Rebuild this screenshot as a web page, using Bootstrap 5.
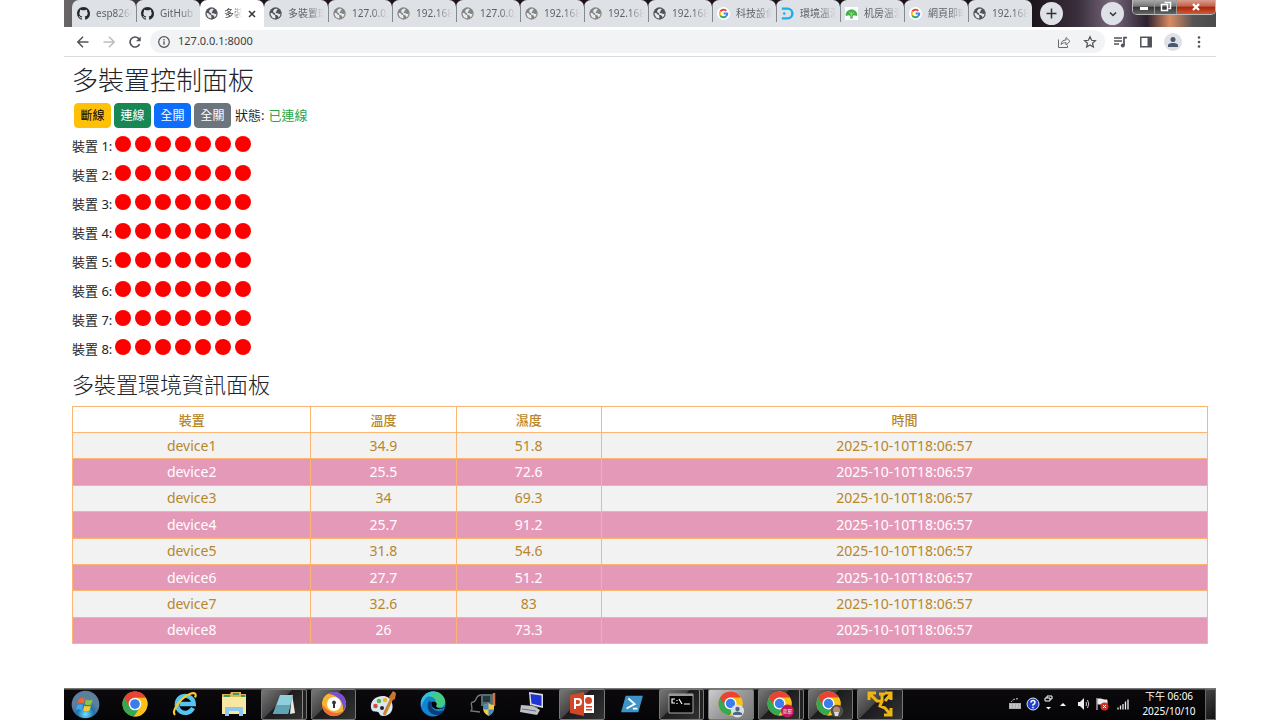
<!DOCTYPE html>
<html lang="zh-Hant">
<head>
<meta charset="utf-8">
<meta name="viewport" content="width=device-width, initial-scale=1">
<title>多裝置控制面板</title>
<link rel="stylesheet" href="https://cdn.jsdelivr.net/npm/bootstrap@5.3.0/dist/css/bootstrap.min.css">
<style>
body{font-family:"Noto Sans","Noto Sans CJK TC",sans-serif;font-size:13px;background:#fff}
.screen{width:90%;min-height:100vh}
/* browser */
.tabstrip{height:27px;background:linear-gradient(90deg,#6b6768 0,#4b4446 4%,#1d151b 12%,#1c141a 84%,#3a2f3c 88%,#78687c 91%,#2b2230 94%,#d98b60 96%,#555 98%,#4c4a4b 100%)}
.tab{flex:0 1 64px;min-width:0;height:27px;background:#dee1e6;border:0;border-radius:7px 7px 0 0;padding:0 4px 0 5px;font-size:10px;color:#5f6368;gap:6px;position:relative}
.tab+.tab:not(.on):not(.after)::before{content:"";position:absolute;left:0;top:5px;height:17px;width:1px;background:#85888d}
.tab .cap{flex:1;min-width:0;overflow:hidden;white-space:nowrap;text-align:left;-webkit-mask-image:linear-gradient(90deg,#000 55%,transparent);mask-image:linear-gradient(90deg,#000 55%,transparent)}
.tab.on{background:#fff;color:#3c4043}
.tab.on .cap{-webkit-mask-image:linear-gradient(90deg,#000 40%,transparent);mask-image:linear-gradient(90deg,#000 40%,transparent)}
.tab svg{flex:none}
.rnd{width:23px;height:23px;border:0;border-radius:50%;background:#dee1e6;padding:0}
.winbtns{height:15px;border:1px solid #bbb;border-top:0;border-radius:0 0 5px 5px;overflow:hidden}
.winbtns button{border:0;border-right:1px solid #999;background:linear-gradient(#aaa 0,#777 45%,#333 50%,#666);padding:0;width:22px;height:14px;line-height:0}
.winbtns .shut{width:38px;border-right:0;background:linear-gradient(#d99c8d 0,#c3604b 45%,#a92408 50%,#cf5b36)}
.toolbar{height:30px;border-bottom:1px solid #dadce0}
.toolbar button{border:0;background:none;padding:0;line-height:0}
.omni{height:23px;border-radius:12px;background:#f1f3f4}
.omni input{border:0;background:none;outline:0;font-size:11px;color:#3c4043;min-width:0;padding:0}
.avatar{width:18px;height:18px;border-radius:50%;background:#dee1e6!important}
/* page */
h1,h2{font-weight:300;color:#212529;margin:0}
h1{font-size:26px;line-height:30px}
h2{font-size:22px;line-height:28px;padding-top:10px}
.ctl{padding:8px 0 0 2px}
.ctl .btns{gap:3px}
.ctl .btn{width:37px;height:25px;padding:0;font-size:12px;line-height:20px;border-radius:4px}
.status{color:#28a745}
.device{height:29px}
.device .nm{width:39px;line-height:20px;white-space:nowrap}
.dot{width:16px;height:16px;border-radius:50%;background:red}
.env{height:238px;table-layout:fixed;margin:0;border-collapse:collapse;text-align:center;line-height:20px}
.env td,.env th{padding:0;height:26px;border:1px solid #fdb574;color:#b8862b;font-weight:500;vertical-align:middle}
.env td{font-size:14px;font-weight:400}
.env tbody tr:nth-child(odd) td{background:#f2f2f2}
.env tbody tr:nth-child(even) td{background:#e599b8;color:#fff}
/* taskbar */
.taskbar{height:32px;background:linear-gradient(#777 0,#777 1px,#0b090c 2px,#050406 100%);color:#fff}
.apps{width:73%}
.apps button{border:1px solid transparent;background:none;padding:0;height:31px;flex:1 1 0;min-width:0;margin:0 2px;line-height:0;border-radius:2px}
.apps .orb{flex:0 0 42px;margin:0 4px 0 0}
.apps .run{border-color:#777;background:linear-gradient(135deg,#777 0,#444 40%,#1c1c1e 42%,#333)}
.apps .multi{box-shadow:inset -3px 0 0 #222,inset -4px 0 0 #888}
.apps .hot{background:linear-gradient(135deg,#ccc,#999 50%,#777)}
.clock{font-size:10px;line-height:15px;text-align:center;width:64px}
.peek{width:11px;height:31px;border:1px solid #666;background:linear-gradient(135deg,#444,#111)!important;padding:0}
</style>
</head>
<body>
<svg width="0" height="0" class="position-absolute" aria-hidden="true">
<defs>
<symbol id="gh" viewBox="0 0 16 16"><path fill="#24292e" d="M8 0C3.58 0 0 3.58 0 8c0 3.54 2.29 6.53 5.47 7.59.4.07.55-.17.55-.38v-1.49c-2.01.37-2.53-.49-2.69-.94-.09-.23-.48-.94-.82-1.13-.28-.15-.68-.52-.01-.53.63-.01 1.08.58 1.23.82.72 1.21 1.87.87 2.33.66.07-.52.28-.87.51-1.07-1.78-.2-3.64-.89-3.64-3.95 0-.87.31-1.59.82-2.15-.08-.2-.36-1.02.08-2.12 0 0 .67-.21 2.2.82a7.4 7.4 0 0 1 4 0c1.53-1.04 2.2-.82 2.2-.82.44 1.1.16 1.92.08 2.12.51.56.82 1.27.82 2.15 0 3.07-1.87 3.75-3.65 3.95.29.25.54.73.54 1.48v2.19c0 .21.15.46.55.38A8 8 0 0 0 16 8c0-4.42-3.58-8-8-8z"/></symbol>
<symbol id="globe" viewBox="0 0 16 16"><circle cx="8" cy="8" r="7.6" fill="currentColor"/><path fill="#e8eaed" d="M2 7.2c1.800.4 3 .9 3.500 1.800.4.8 1.300.8 1.900 1.200.8.5.4 1.700.3 3.900C4.300 14.200 1.700 11 2 7.200zM5.200 4.500C6.500 2.400 8.500 1.900 10.500 2.500c.3 1-.8 1.300-1.300 2-.3.6.3 1.200-.4 1.600-.6.3-1 .9-.5 1.300 1 .5 2.200-.3 3 .6.6.9 1.600.5 2.800.3.1 1.500-.8 3.500-2.500 4.700-.3-1-.2-2-1.200-2.500-1-.3-2.500-.2-2.800-1.500-.2-1-.3-1.600-1.300-2-.9-.5-1.500-1.300-1.100-2.500z"/></symbol>
<symbol id="goog" viewBox="0 0 16 16"><circle cx="8" cy="8" r="8" fill="#fff"/><g fill="none" stroke-width="2.300"><path stroke="#ea4335" d="M4 5.600A4.700 4.700 0 0 1 11.400 4.700"/><path stroke="#fbbc05" d="M4 5.600a4.700 4.700 0 0 0 0 4.800"/><path stroke="#34a853" d="M4 10.400a4.700 4.700 0 0 0 7.200 1"/><path stroke="#4285f4" d="M11.200 11.400A4.700 4.700 0 0 0 12.700 8H8.200"/></g></symbol>
<symbol id="dd" viewBox="0 0 16 16"><path d="M1 2h7a6 6 0 0 1 0 12H1" fill="none" stroke="#1ab0ec" stroke-width="3"/><circle cx="4" cy="8" r="1.600" fill="#1ab0ec"/></symbol>
<symbol id="tree" viewBox="0 0 16 16"><path fill="#fff" d="M0 0h16v16H0z"/><path fill="#43b04b" d="M1 11C0 6 4 3 8 3s8 3 7 8l-4-1-1.500 1v3h-3v-3L5 10z"/><path stroke="#a7dc6e" d="M8 12V6M8 10 5 6M8 10l3-4" fill="none"/></symbol>
<symbol id="chrome" viewBox="0 0 24 24"><circle cx="12" cy="12" r="11.500" fill="#fbc116"/><path fill="#34a853" d="M12 12 2 6.200a11.500 11.500 0 0 0 9.200 17.300L17 14.800z"/><path fill="#fbc116" d="M12 6.300h10a11.500 11.500 0 0 1-10.800 17.200L17 14.800z"/><path fill="#ea4335" d="M2 6.200A11.500 11.500 0 0 1 22 6.300H12a5.700 5.700 0 0 0-5 8.400z"/><circle cx="12" cy="12" r="5.800" fill="#fff"/><circle cx="12" cy="12" r="4.500" fill="#3b7ded"/></symbol>
</defs>
</svg>

<div class="screen mx-auto d-flex flex-column">
<header>
  <div class="tabstrip d-flex ps-2">
    <div class="d-flex flex-grow-1 align-items-center" id="tabs">
      <button class="rnd ms-2 lh-1 d-flex align-items-center justify-content-center" aria-label="新分頁" id="plus"><svg width="13" height="13" viewBox="0 0 13 13"><path d="M6.500 1.500v10M1.500 6.500h10" stroke="#333" stroke-width="1.500"/></svg></button>
    </div>
    <div class="d-flex align-items-start">
      <button class="rnd me-2 align-self-center d-flex align-items-center justify-content-center" aria-label="搜尋分頁"><svg width="10" height="10" viewBox="0 0 10 10"><path d="m2 3.500 3 3 3-3" fill="none" stroke="#333" stroke-width="1.500"/></svg></button>
      <div class="winbtns d-flex">
        <button aria-label="最小化"><svg width="12" height="12" viewBox="0 0 12 12"><path d="M2 6h8v3H2z" fill="#fff"/></svg></button>
        <button aria-label="還原"><svg width="12" height="12" viewBox="0 0 12 12"><path d="M4.500 1.500h6v6h-2M1.500 3.500h6v6h-6z" fill="none" stroke="#fff" stroke-width="1.500"/></svg></button>
        <button class="shut" aria-label="關閉"><svg width="12" height="12" viewBox="0 0 12 12"><path d="m3 3 6 6m0-6-6 6" stroke="#fff" stroke-width="2.300"/></svg></button>
      </div>
    </div>
  </div>
  <div class="toolbar d-flex align-items-center">
    <div class="d-flex gap-2 ps-2 me-1">
      <button class="ms-1" aria-label="上一頁"><svg width="14" height="14" viewBox="0 0 14 14"><path d="M12.500 7h-11M7 1.800 1.800 7 7 12.200" fill="none" stroke="#50545a" stroke-width="1.500"/></svg></button>
      <button class="mx-1" aria-label="下一頁"><svg width="14" height="14" viewBox="0 0 14 14"><path d="M1.500 7h11M7 1.800 12.200 7 7 12.200" fill="none" stroke="#babcbe" stroke-width="1.500"/></svg></button>
      <button class="me-1" aria-label="重新載入"><svg width="14" height="14" viewBox="0 0 14 14"><path d="M11.600 9.200A5 5 0 1 1 10.500 3.400L12 5" fill="none" stroke="#50545a" stroke-width="1.600"/><path d="M12.700 1.500v4.800H8z" fill="#50545a"/></svg></button>
    </div>
    <div class="omni flex-grow-1 d-flex align-items-center px-2">
      <svg width="12" height="12" viewBox="0 0 12 12"><circle cx="6" cy="6" r="5.300" fill="none" stroke="#50545a" stroke-width="1.200"/><path d="M6 5.300v3.500M6 3v1.400" stroke="#50545a" stroke-width="1.300"/></svg>
      <input class="flex-grow-1 ms-2" aria-label="網址" value="127.0.0.1:8000">
      <button aria-label="分享"><svg width="14" height="14" viewBox="0 0 14 14"><path d="M1.500 4.500v8h9v-2M4 9.500c.4-3 2-4.500 5-4.500V2.500l4 3.800L9 10V7.700C6.800 7.700 5.200 8 4 9.500z" fill="none" stroke="#666a6f"/></svg></button>
      <button class="ms-2 ps-1" aria-label="加入書籤"><svg width="14" height="14" viewBox="0 0 14 14"><path d="m7 1.800 1.600 3.500 3.800.4-2.900 2.500.9 3.800L7 10l-3.400 2 .9-3.800-2.900-2.500 3.800-.4z" fill="none" stroke="#50545a" stroke-width="1.200"/></svg></button>
    </div>
    <div class="d-flex gap-2 align-items-center pe-2 me-1">
      <button class="ms-2 me-1" aria-label="媒體"><svg width="15" height="14" viewBox="0 0 15 14"><path d="M1 3h8M1 6h8M1 9h5" stroke="#50545a" stroke-width="1.500"/><path d="M11 10V2.700h3" fill="none" stroke="#50545a" stroke-width="1.700"/><circle cx="9.800" cy="10.500" r="2" fill="#50545a"/></svg></button>
      <button class="me-1" aria-label="側邊面板"><svg width="12" height="12" viewBox="0 0 12 12"><path d="M.8 1.300h10.400v9.400H.8z" fill="none" stroke="#50545a" stroke-width="1.500"/><path d="M7.500 1h4v10h-4z" fill="#50545a"/></svg></button>
      <button class="avatar" aria-label="使用者"><svg width="14" height="14" viewBox="0 0 14 14"><circle cx="7" cy="4.500" r="2.500" fill="#4b5870"/><path d="M2 12V9.800C2.500 8.500 5 8 7 8s4.500.5 5 1.800V12z" fill="#4b5870"/></svg></button>
      <button class="ms-1" aria-label="選單"><svg width="10" height="14" viewBox="0 0 10 14"><g fill="#50545a"><circle cx="5" cy="2.500" r="1.300"/><circle cx="5" cy="7" r="1.300"/><circle cx="5" cy="11.500" r="1.300"/></g></svg></button>
    </div>
  </div>
</header>

<main class="flex-grow-1 px-2">
  <h1 class="pt-2">多裝置控制面板</h1>
  <div class="ctl d-flex align-items-center">
    <div class="btns d-flex">
      <button class="btn btn-warning">斷線</button>
      <button class="btn btn-success">連線</button>
      <button class="btn btn-primary">全開</button>
      <button class="btn btn-secondary">全關</button>
    </div>
    <span class="ps-1">狀態:</span><span class="status ms-1">已連線</span>
  </div>
  <div id="devices"></div>
  <h2>多裝置環境資訊面板</h2>
  <div class="pt-2">
  <table class="env w-100">
    <colgroup><col style="width:21%"><col style="width:12.8%"><col style="width:12.8%"><col></colgroup>
    <thead><tr><th>裝置</th><th>溫度</th><th>濕度</th><th>時間</th></tr></thead>
    <tbody id="rows"></tbody>
  </table>
  </div>
</main>

<footer class="taskbar d-flex align-items-center">
  <div class="apps d-flex">
    <button class="orb" aria-label="開始"><svg width="29" height="29" viewBox="0 0 30 30"><defs><radialGradient id="ob" cy=".85"><stop offset="0" stop-color="#6fe0ff"/><stop offset=".6" stop-color="#2173ad"/><stop offset="1" stop-color="#5b7f9c"/></radialGradient></defs><circle cx="15" cy="15" r="14.300" fill="url(#ob)"/><path fill="#f0652f" d="M8 9.500c2-1.500 4-1.500 6.500-.3L13 14.300c-2-1-4-1-6.300.2z"/><path fill="#8cc63f" d="M15.500 9.700c2 1.200 4.200 1.200 6.700 0L21 15c-2.500 1-4.500 1-6.800-.2z"/><path fill="#3fa9f5" d="M6.300 15.700c2.300-1.200 4.300-1.200 6.300-.2l-1.400 5.200c-2-1-4-1-6.200 0z"/><path fill="#fdc82f" d="M13.900 16c2.200 1.200 4.300 1.200 6.700.2L19.300 21c-2.500 1.200-4.600 1.200-6.800 0z"/></svg></button>
    <button aria-label="Chrome"><svg width="26" height="26"><use href="#chrome"/></svg></button>
    <button aria-label="Internet Explorer"><svg width="26" height="26" viewBox="0 0 26 26"><path d="M21 17a8.500 8.500 0 1 1 .8-4H7.500" fill="none" stroke="#55c4f3" stroke-width="4.300"/><path d="M3 24C-1 20 9 6 19 2.500c4.500-1.300 5.500 1 4 4" fill="none" stroke="#f9c92d" stroke-width="2.200"/></svg></button>
    <button aria-label="檔案總管"><svg width="28" height="26" viewBox="0 0 28 26"><path fill="#d9b65c" d="M2 3h8l1-2h10v2h5v20H2z"/><path fill="#f7e7a0" d="M2 6h24v17H2z"/><path d="M4 5h6m3-2h6m2 2h4" stroke="#3a9d60" stroke-width="2"/><path d="M7 25v-7h14v7" fill="none" stroke="#8cc9ea" stroke-width="4"/></svg></button>
    <button class="run multi" aria-label="記事本"><svg width="26" height="26" viewBox="0 0 26 26"><path fill="#e9e9dd" d="m21 3 3 19-5 1z"/><path fill="#8fcfdc" d="M9 4h13l-5 19H2z"/><path fill="#5fa3b4" d="M5.500 14h14l-2.500 9H2z"/></svg></button>
    <button class="run" aria-label="Secure Browser"><svg width="26" height="26" viewBox="0 0 26 26"><circle cx="13" cy="13" r="12" fill="#f6b52d"/><path fill="#7a4fd8" d="M7 2.500A12 12 0 0 1 25 13c0 3-2 6-3 7C23 12 19 5 7 2.500z"/><path fill="#f06c34" d="M1 13c0 9 8 13 14 12 4-1 6-3 7-5-6 4-15 2-21-7z"/><circle cx="13" cy="13" r="7" fill="#fff"/><path fill="#333" d="M13 9.500a2 2 0 0 1 1 3.700V17h-2v-3.800a2 2 0 0 1 1-3.700z"/></svg></button>
    <button aria-label="小畫家"><svg width="28" height="26" viewBox="0 0 28 26"><path fill="#d8e8f2" d="M14 5C6 5 1 10 2 17c1 5 5 3 7 4s1 4 5 4c8 0 11-7 9-13-1-5-5-7-9-7z"/><circle cx="6.500" cy="15" r="2.300" fill="#d84c3e"/><circle cx="10" cy="10" r="2.300" fill="#5eb54b"/><circle cx="16" cy="9" r="2.300" fill="#f0b32d"/><circle cx="13" cy="17" r="2" fill="#222"/><path stroke="#cf8435" stroke-width="3" d="m15 24 8-17"/><path fill="#c97632" d="m20 6 4-6 3 2-1 6-4 2z"/></svg></button>
    <button aria-label="Edge"><svg width="26" height="26" viewBox="0 0 26 26"><circle cx="13" cy="13" r="12.500" fill="#1384d2"/><path fill="#43ca83" d="M2 8C6-1 21-3 25 9c1 6-4 9-8 7-3-1-1-3-1-5-1-6-9-7-14-3z"/><path fill="#32bfe0" d="M1 10C5-1 16-1 19 3 9 2 5 6 1 16z"/><path fill="#0b3d78" d="M9 10c-4 7 1 15 9 14 3 0 5-3 6-5-6 3-15 0-12-8z"/><path fill="#07070a" d="M12 11c-2 5 3 9 12 6l2-2c-3 3-9 3-10 0 2-2 0-5-4-4z"/></svg></button>
    <button aria-label="裝置工具"><svg width="26" height="26" viewBox="0 0 26 26"><path d="M11 3h12v12H11z" fill="#536e70"/><path d="M13 5h7v6h-7z" fill="#26383a"/><path d="M24 2v13" stroke="#d6713d" stroke-width="2.500"/><path d="M11 4c-6 0-4 7-8 7s1 7-2 9l9 1" fill="none" stroke="#737b80" stroke-width="1.300"/><path d="M13 14q4 0 5.500-2 1.500 2 5.500 2 1 8-5.500 11Q12 22 13 14z" fill="#f5cd3a"/><path d="M18.500 12v6.500H13V14q4 0 5.500-2zm0 6.500H24q-1 4-5.500 6.500z" fill="#3d8bd5"/></svg></button>
    <button aria-label="遠端"><svg width="26" height="26" viewBox="0 0 26 26"><path fill="#ddd" d="m10 1 14 2v14l-13-3z"/><path fill="#1c35d3" d="m11.500 3 11 1.500V15l-10-2.500z"/><path fill="#bbc1c6" d="m2 14 13 1 6 4-3 5-17-3z"/><path stroke="#6b7177" d="m3 18 14 2m-5-6 7 3"/></svg></button>
    <button class="run" aria-label="PowerPoint"><svg width="26" height="26" viewBox="0 0 26 26"><path fill="#fff" d="M12 4h13v18H12z"/><path fill="#d24726" d="M1 4 15 1v24L1 22zM17 15h6v1.500h-6zm0 3h6v1.500h-6z"/><circle cx="19.500" cy="9.500" r="3.500" fill="#d24726"/><path d="M6 18V8h3q3 0 3 3t-3 3H6" fill="none" stroke="#fff" stroke-width="2"/></svg></button>
    <button aria-label="PowerShell"><svg width="24" height="20" viewBox="0 0 26 22"><path fill="#3e94c9" d="M6 2h19l-5 18H1z"/><path d="m9 5 7 6-9 5m7 0h5" fill="none" stroke="#fff" stroke-width="2"/></svg></button>
    <button class="run multi" aria-label="命令提示字元"><svg width="26" height="22" viewBox="0 0 26 22"><path fill="#050505" stroke="#aaa" d="M1 1h24v19H1z"/><path stroke="#999" stroke-width="2" d="M1 2h24"/><path d="M7 6H4v4h3m2-3v1m0 2v1m2-5 3 5m2 0h6" fill="none" stroke="#fff" stroke-width="1.200"/></svg></button>
    <button class="run hot" aria-label="Chrome 使用者"><svg width="28" height="27" viewBox="0 0 28 27"><use href="#chrome" width="25" height="25" x="1"/><circle cx="20.500" cy="20" r="6.500" fill="#d6e0ea"/><circle cx="20.500" cy="18" r="2.200" fill="#53677e"/><path d="M16 24v-2q4-3 9 0v2z" fill="#53677e"/></svg></button>
    <button class="run multi" aria-label="Chrome 奕辰"><svg width="28" height="27" viewBox="0 0 28 27"><use href="#chrome" width="25" height="25"/><circle cx="20.500" cy="20" r="6.500" fill="#c2185b"/><text x="20.500" y="22" font-size="5" fill="#fff" text-anchor="middle">奕辰</text></svg></button>
    <button class="run" aria-label="Chrome"><svg width="28" height="27" viewBox="0 0 28 27"><use href="#chrome" width="25" height="25"/><circle cx="21" cy="20" r="6.300" fill="#4b5147"/><circle cx="20.500" cy="19" r="3.500" fill="#ba8871"/><path d="M18 21h5l-1 4h-3z" fill="#ddd"/></svg></button>
    <button class="run" aria-label="VMware"><svg width="26" height="26" viewBox="0 0 26 26"><path d="M2 9V2h7M3 3l7 7h5V3m-3 0h6m0 7 6-7m-6-1h6v7M15 10l-2 5 5 2 5 6m-6 1h7v-7" fill="none" stroke="#f0b510" stroke-width="3"/></svg></button>
  </div>
  <div class="ms-auto d-flex align-items-center gap-1">
    <svg width="14" height="14" viewBox="0 0 14 14"><path fill="#aaa" d="M1 6h12v6H1z"/><path d="M3 5q3-4 8-3M2 8h10M2 10h10" fill="none" stroke="#ddd" stroke-dasharray="2 1"/></svg>
    <svg width="14" height="14" viewBox="0 0 14 14"><circle cx="7" cy="7" r="6" fill="#2142c7" stroke="#dce5ff"/><path d="M5 5.500q0-2 2-2t2 1.800-2 2.500v1m0 1v1.500" fill="none" stroke="#fff" stroke-width="1.500"/></svg>
    <svg width="9" height="18" viewBox="0 0 9 18"><path d="M3 3V1h5v3H6M1 3h5v3H1z" fill="none" stroke="#fff"/><path d="M2 12h5L4.500 14.500z" fill="#fff"/></svg>
    <svg width="12" height="8" viewBox="0 0 12 8"><path d="m3 6 3-3 3 3z" fill="#fff"/></svg>
    <svg class="ms-1" width="14" height="14" viewBox="0 0 14 14"><path d="M1 5h2l4-4v12L3 9H1z" fill="#eee"/><path d="M9 5q1 2 0 4m1.500-6q2.500 4 0 8" fill="none" stroke="#ccc"/></svg>
    <svg width="14" height="14" viewBox="0 0 14 14"><path d="M2 1v12M3 2h3l3 1h3v5H9L6 7H3z" stroke="#eee" fill="#eee"/><circle cx="9.500" cy="9.500" r="4" fill="#d82a20"/><path d="m8 8 3 3m0-3-3 3" stroke="#fff"/></svg>
    <svg class="ms-1" width="12" height="12" viewBox="0 0 12 12"><path d="M1 9.500v2m2.500-4v4M6 6v5.500m2.500-8v8M11 1.500v10" stroke="#eee" stroke-width="1.300"/></svg>
    <div class="clock ms-1">下午 06:06<br>2025/10/10</div>
    <button class="peek" aria-label="顯示桌面"></button>
  </div>
</footer>
</div>
<script src="https://cdn.jsdelivr.net/npm/bootstrap@5.3.0/dist/js/bootstrap.bundle.min.js"></script>
<script>
const tabs=[['gh','esp8266'],['gh','GitHub -'],['globe','多裝置','on'],['globe','多裝置環','after'],['globe','127.0.0.1','dim'],['globe','192.168.','dim'],['globe','127.0.0.1','dim'],['globe','192.168.','dim'],['globe','192.168.','dim'],['globe','192.168.'],['goog','科技設備'],['dd','環境溫濕'],['tree','机房温湿'],['goog','網頁即時'],['globe','192.168.']];
document.getElementById('plus').insertAdjacentHTML('beforebegin',tabs.map(([i,t,c=''])=>
 `<button class="tab d-flex align-items-center ${c}"><svg width="13" height="13" style="color:${c==='dim'?'#858585':'#505357'}"><use href="#${i}"/></svg><span class="cap">${t}</span>${c==='on'?'<svg width="8" height="8" viewBox="0 0 8 8" class="me-1"><path d="m1 1 6 6m0-6-6 6" stroke="#333" stroke-width="1.500"/></svg>':''}</button>`).join(''));
document.getElementById('devices').innerHTML=Array.from({length:8},(_,n)=>
 `<div class="device d-flex gap-1 pt-2"><span class="nm">裝置 ${n+1}:</span>${'<span class="dot"></span>'.repeat(7)}</div>`).join('');
const data=[[34.9,51.8],[25.5,72.6],[34,69.3],[25.7,91.2],[31.8,54.6],[27.7,51.2],[32.6,83],[26,73.3]];
document.getElementById('rows').innerHTML=data.map(([t,h],n)=>
 `<tr><td>device${n+1}</td><td>${t}</td><td>${h}</td><td>2025-10-10T18:06:57</td></tr>`).join('');
</script>
</body>
</html>
